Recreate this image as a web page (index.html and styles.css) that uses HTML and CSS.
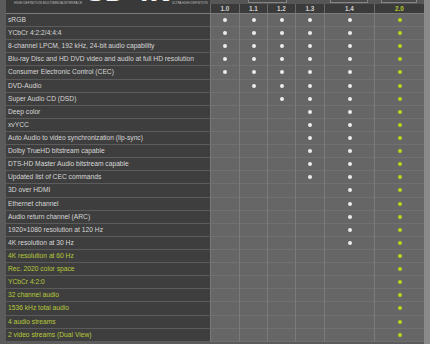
FILE: index.html
```html
<!DOCTYPE html>
<html lang="en">
<head>
<meta charset="utf-8">
<title>HDMI versions</title>
<link rel="stylesheet" href="styles.css">
</head>
<body>
<div class="page">
  <div class="edge-left"></div>
  <div class="table">
    <div class="head">
      <div class="brand">
        <span class="tag tag-left">HIGH DEFINITION MULTIMEDIA INTERFACE</span>
        <span class="logo">3D 4K</span>
        <span class="tag tag-right">ULTRA HIGH DEFINITION</span>
      </div>
      <div class="band"></div>
      <div class="cap cap-a"></div>
      <div class="cap cap-b"></div>
      <div class="cap cap-c"></div>
      <div class="ver">1.0</div>
      <div class="ver">1.1</div>
      <div class="ver">1.2</div>
      <div class="ver">1.3</div>
      <div class="ver">1.4</div>
      <div class="ver ver-new">2.0</div>
    </div>

    <div class="row"><div class="label">sRGB</div><div class="cell"><i class="dot"></i></div><div class="cell"><i class="dot"></i></div><div class="cell"><i class="dot"></i></div><div class="cell"><i class="dot"></i></div><div class="cell"><i class="dot"></i></div><div class="cell"><i class="dot dot-new"></i></div></div>
    <div class="row"><div class="label">YCbCr 4:2:2/4:4:4</div><div class="cell"><i class="dot"></i></div><div class="cell"><i class="dot"></i></div><div class="cell"><i class="dot"></i></div><div class="cell"><i class="dot"></i></div><div class="cell"><i class="dot"></i></div><div class="cell"><i class="dot dot-new"></i></div></div>
    <div class="row"><div class="label">8-channel LPCM, 192 kHz, 24-bit audio capability</div><div class="cell"><i class="dot"></i></div><div class="cell"><i class="dot"></i></div><div class="cell"><i class="dot"></i></div><div class="cell"><i class="dot"></i></div><div class="cell"><i class="dot"></i></div><div class="cell"><i class="dot dot-new"></i></div></div>
    <div class="row"><div class="label">Blu-ray Disc and HD DVD video and audio at full HD resolution</div><div class="cell"><i class="dot"></i></div><div class="cell"><i class="dot"></i></div><div class="cell"><i class="dot"></i></div><div class="cell"><i class="dot"></i></div><div class="cell"><i class="dot"></i></div><div class="cell"><i class="dot dot-new"></i></div></div>
    <div class="row"><div class="label">Consumer Electronic Control (CEC)</div><div class="cell"><i class="dot"></i></div><div class="cell"><i class="dot"></i></div><div class="cell"><i class="dot"></i></div><div class="cell"><i class="dot"></i></div><div class="cell"><i class="dot"></i></div><div class="cell"><i class="dot dot-new"></i></div></div>
    <div class="row"><div class="label">DVD-Audio</div><div class="cell"></div><div class="cell"><i class="dot"></i></div><div class="cell"><i class="dot"></i></div><div class="cell"><i class="dot"></i></div><div class="cell"><i class="dot"></i></div><div class="cell"><i class="dot dot-new"></i></div></div>
    <div class="row"><div class="label">Super Audio CD (DSD)</div><div class="cell"></div><div class="cell"></div><div class="cell"><i class="dot"></i></div><div class="cell"><i class="dot"></i></div><div class="cell"><i class="dot"></i></div><div class="cell"><i class="dot dot-new"></i></div></div>
    <div class="row"><div class="label">Deep color</div><div class="cell"></div><div class="cell"></div><div class="cell"></div><div class="cell"><i class="dot"></i></div><div class="cell"><i class="dot"></i></div><div class="cell"><i class="dot dot-new"></i></div></div>
    <div class="row"><div class="label">xvYCC</div><div class="cell"></div><div class="cell"></div><div class="cell"></div><div class="cell"><i class="dot"></i></div><div class="cell"><i class="dot"></i></div><div class="cell"><i class="dot dot-new"></i></div></div>
    <div class="row"><div class="label">Auto Audio to video synchronization (lip-sync)</div><div class="cell"></div><div class="cell"></div><div class="cell"></div><div class="cell"><i class="dot"></i></div><div class="cell"><i class="dot"></i></div><div class="cell"><i class="dot dot-new"></i></div></div>
    <div class="row"><div class="label">Dolby TrueHD bitstream capable</div><div class="cell"></div><div class="cell"></div><div class="cell"></div><div class="cell"><i class="dot"></i></div><div class="cell"><i class="dot"></i></div><div class="cell"><i class="dot dot-new"></i></div></div>
    <div class="row"><div class="label">DTS-HD Master Audio bitstream capable</div><div class="cell"></div><div class="cell"></div><div class="cell"></div><div class="cell"><i class="dot"></i></div><div class="cell"><i class="dot"></i></div><div class="cell"><i class="dot dot-new"></i></div></div>
    <div class="row"><div class="label">Updated list of CEC commands</div><div class="cell"></div><div class="cell"></div><div class="cell"></div><div class="cell"><i class="dot"></i></div><div class="cell"><i class="dot"></i></div><div class="cell"><i class="dot dot-new"></i></div></div>
    <div class="row"><div class="label">3D over HDMI</div><div class="cell"></div><div class="cell"></div><div class="cell"></div><div class="cell"></div><div class="cell"><i class="dot"></i></div><div class="cell"><i class="dot dot-new"></i></div></div>
    <div class="row"><div class="label">Ethernet channel</div><div class="cell"></div><div class="cell"></div><div class="cell"></div><div class="cell"></div><div class="cell"><i class="dot"></i></div><div class="cell"><i class="dot dot-new"></i></div></div>
    <div class="row"><div class="label">Audio return channel (ARC)</div><div class="cell"></div><div class="cell"></div><div class="cell"></div><div class="cell"></div><div class="cell"><i class="dot"></i></div><div class="cell"><i class="dot dot-new"></i></div></div>
    <div class="row"><div class="label">1920×1080 resolution at 120 Hz</div><div class="cell"></div><div class="cell"></div><div class="cell"></div><div class="cell"></div><div class="cell"><i class="dot"></i></div><div class="cell"><i class="dot dot-new"></i></div></div>
    <div class="row"><div class="label">4K resolution at 30 Hz</div><div class="cell"></div><div class="cell"></div><div class="cell"></div><div class="cell"></div><div class="cell"><i class="dot"></i></div><div class="cell"><i class="dot dot-new"></i></div></div>
    <div class="row row-new"><div class="label">4K resolution at 60 Hz</div><div class="cell"></div><div class="cell"></div><div class="cell"></div><div class="cell"></div><div class="cell"></div><div class="cell"><i class="dot dot-new"></i></div></div>
    <div class="row row-new"><div class="label">Rec. 2020 color space</div><div class="cell"></div><div class="cell"></div><div class="cell"></div><div class="cell"></div><div class="cell"></div><div class="cell"><i class="dot dot-new"></i></div></div>
    <div class="row row-new"><div class="label">YCbCr 4:2:0</div><div class="cell"></div><div class="cell"></div><div class="cell"></div><div class="cell"></div><div class="cell"></div><div class="cell"><i class="dot dot-new"></i></div></div>
    <div class="row row-new"><div class="label">32 channel audio</div><div class="cell"></div><div class="cell"></div><div class="cell"></div><div class="cell"></div><div class="cell"></div><div class="cell"><i class="dot dot-new"></i></div></div>
    <div class="row row-new"><div class="label">1536 kHz total audio</div><div class="cell"></div><div class="cell"></div><div class="cell"></div><div class="cell"></div><div class="cell"></div><div class="cell"><i class="dot dot-new"></i></div></div>
    <div class="row row-new"><div class="label">4 audio streams</div><div class="cell"></div><div class="cell"></div><div class="cell"></div><div class="cell"></div><div class="cell"></div><div class="cell"><i class="dot dot-new"></i></div></div>
    <div class="row row-new"><div class="label">2 video streams (Dual View)</div><div class="cell"></div><div class="cell"></div><div class="cell"></div><div class="cell"></div><div class="cell"></div><div class="cell"><i class="dot dot-new"></i></div></div>
  </div>
  <div class="edge-right"></div>
</div>
</body>
</html>
```

FILE: styles.css
```css
* { box-sizing: border-box; }

html, body {
  margin: 0;
  padding: 0;
  background: #5b5b5b;
  overflow: hidden;
}

body {
  width: 430px;
  height: 344px;
  font-family: "Liberation Sans", Arial, sans-serif;
}

.page {
  display: flex;
  width: 430px;
  height: 344px;
  overflow: hidden;
}

.edge-left {
  width: 6px;
  flex: none;
  background: #5b5b5b;
}

.edge-right {
  width: 6px;
  flex: none;
  background: #8a8a8a;
}

.table {
  width: 418px;
  flex: none;
  --cols: 204px 29px 28px 28px 29px 50px 50px;
}

/* header */
.head {
  display: grid;
  grid-template-columns: var(--cols);
  grid-template-rows: 4px 9px;
  border-bottom: 1px solid #7c7c7c;
  background: #3a3a3a;
}

.brand {
  grid-column: 1;
  grid-row: 1 / 3;
  display: flex;
  align-items: flex-start;
  overflow: hidden;
  padding-left: 8px;
  background: #393939;
}

.tag {
  flex: none;
  font-size: 3.3px;
  line-height: 6px;
  color: #b9b9b9;
  white-space: nowrap;
}

.tag-left { width: 74px; }

.tag-right { width: 34px; font-size: 3px; }

.logo {
  flex: none;
  width: 84px;
  font-family: "DejaVu Sans", sans-serif;
  font-weight: bold;
  font-size: 25px;
  line-height: 12px;
  color: #f4f4f4;
  margin-top: -13px;
  white-space: nowrap;
  letter-spacing: -1px;
  word-spacing: 1px;
}

.band {
  grid-column: 2 / 8;
  grid-row: 1;
  background: #565656;
}

.cap {
  grid-row: 1;
  height: 3px;
  border: 1px solid #858585;
  border-top: none;
  background: #4b4b4b;
  justify-self: center;
  align-self: start;
}

.cap-a { grid-column: 3 / 5; width: 39px; }
.cap-b { grid-column: 6; width: 38px; }
.cap-c { grid-column: 7; width: 36px; }

.ver {
  grid-row: 2;
  display: flex;
  align-items: center;
  justify-content: center;
  font-size: 6.3px;
  font-weight: bold;
  color: #cfcfcf;
  border-left: 1px solid #6a6a6a;
  background: #3b3b3b;
}

.ver-new { color: #b8cc2a; }

/* rows */
.row {
  display: grid;
  grid-template-columns: var(--cols);
  height: 13.12px;
}

.label {
  background: #3e3e3e;
  border-bottom: 1px solid #5c5c5c;
  padding-left: 2px;
  font-size: 6.7px;
  line-height: 12.5px;
  color: #d7d7d7;
  white-space: nowrap;
  overflow: hidden;
}

.row-new .label { color: #b7c93a; }

.cell {
  background: #666666;
  border-left: 1px solid #7a7a7a;
  border-bottom: 1px solid #707070;
  display: flex;
  align-items: center;
  justify-content: center;
}

.dot {
  display: block;
  width: 4px;
  height: 4px;
  border-radius: 50%;
  background: #ececec;
}

.dot-new { background: #bcd21c; }
```
